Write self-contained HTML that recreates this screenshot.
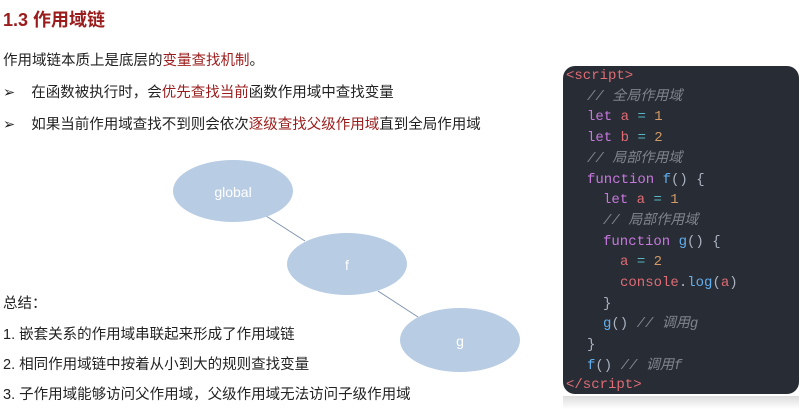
<!DOCTYPE html>
<html><head><meta charset="utf-8"><style>
body{margin:0;width:800px;height:409px;background:#fff;position:relative;overflow:hidden;font-family:"Liberation Sans","Noto Sans CJK SC",sans-serif;color:#222}
.t{position:absolute;white-space:nowrap;line-height:20px}
.r{color:#9b1c1c}
#code{position:absolute;left:563px;top:66px;width:236px;height:328px;background:#282c34;border-radius:12px}
.c{position:absolute;font-family:"Liberation Mono","Noto Sans CJK SC",monospace;font-size:14px;line-height:20px;height:20px;white-space:nowrap;color:#abb2bf}
.k{color:#c678dd}.v{color:#e06c75}.n{color:#d19a66}.f{color:#61afef}.cm{color:#7f848e;font-style:italic}.o{color:#56b6c2}
</style></head><body>
<div class="t r" style="left:3px;top:8px;font-size:18px;font-weight:bold;line-height:24px">1.3 作用域链</div>
<div class="t" style="left:3px;top:51px;font-size:14.5px">作用域链本质上是底层的<span class="r">变量查找机制</span>。</div>
<div class="t" style="left:3px;top:83px;font-size:14.5px">➢ &nbsp;&nbsp;&nbsp;在函数被执行时，会<span class="r">优先查找当前</span>函数作用域中查找变量</div>
<div class="t" style="left:3px;top:115px;font-size:14.5px">➢ &nbsp;&nbsp;&nbsp;如果当前作用域查找不到则会依次<span class="r">逐级查找父级作用域</span>直到全局作用域</div>
<div class="t" style="left:3px;top:294px;font-size:14.5px">总结：</div>
<div class="t" style="left:3px;top:325px;font-size:14.5px">1. 嵌套关系的作用域串联起来形成了作用域链</div>
<div class="t" style="left:3px;top:355px;font-size:14.5px">2. 相同作用域链中按着从小到大的规则查找变量</div>
<div class="t" style="left:3px;top:385px;font-size:14.5px">3. 子作用域能够访问父作用域，父级作用域无法访问子级作用域</div>
<svg style="position:absolute;left:0;top:0" width="560" height="409">
<line x1="305" y1="241" x2="266" y2="216" stroke="#7f93b0" stroke-width="1"/>
<line x1="418" y1="317" x2="378" y2="291" stroke="#7f93b0" stroke-width="1"/>
<ellipse cx="233" cy="191" rx="60" ry="31" fill="#b8cce4"/>
<ellipse cx="347" cy="264" rx="60" ry="31" fill="#b8cce4"/>
<ellipse cx="460" cy="340" rx="60" ry="32" fill="#b8cce4"/>
<text x="233" y="197" fill="#fff" font-size="14" text-anchor="middle" font-family="Liberation Sans">global</text>
<text x="347" y="270" fill="#fff" font-size="14" text-anchor="middle" font-family="Liberation Sans">f</text>
<text x="460" y="346" fill="#fff" font-size="14" text-anchor="middle" font-family="Liberation Sans">g</text>
</svg>
<div id="code"></div>
<div style="position:absolute;left:563px;top:396px;width:236px;height:13px;background:linear-gradient(#ddd,#fff)"></div>
<div class="c" style="left:566px;top:66px"><span class="v">&lt;script&gt;</span></div>
<div class="c cm" style="left:587px;top:87px">// 全局作用域</div>
<div class="c" style="left:587px;top:107px"><span class="k">let</span> <span class="v">a</span> <span class="o">=</span> <span class="n">1</span></div>
<div class="c" style="left:587px;top:128px"><span class="k">let</span> <span class="v">b</span> <span class="o">=</span> <span class="n">2</span></div>
<div class="c cm" style="left:587px;top:149px">// 局部作用域</div>
<div class="c" style="left:587px;top:170px"><span class="k">function</span> <span class="f">f</span>() {</div>
<div class="c" style="left:603px;top:190px"><span class="k">let</span> <span class="v">a</span> <span class="o">=</span> <span class="n">1</span></div>
<div class="c cm" style="left:603px;top:211px">// 局部作用域</div>
<div class="c" style="left:603px;top:232px"><span class="k">function</span> <span class="f">g</span>() {</div>
<div class="c" style="left:620px;top:252px"><span class="v">a</span> <span class="o">=</span> <span class="n">2</span></div>
<div class="c" style="left:620px;top:273px"><span class="v">console</span>.<span class="f">log</span>(<span class="v">a</span>)</div>
<div class="c" style="left:603px;top:294px">}</div>
<div class="c" style="left:603px;top:314px"><span class="f">g</span>() <span class="cm">// 调用g</span></div>
<div class="c" style="left:587px;top:335px">}</div>
<div class="c" style="left:587px;top:356px"><span class="f">f</span>() <span class="cm">//  调用f</span></div>
<div class="c" style="left:566px;top:375px"><span class="v">&lt;/script&gt;</span></div>
</body></html>
